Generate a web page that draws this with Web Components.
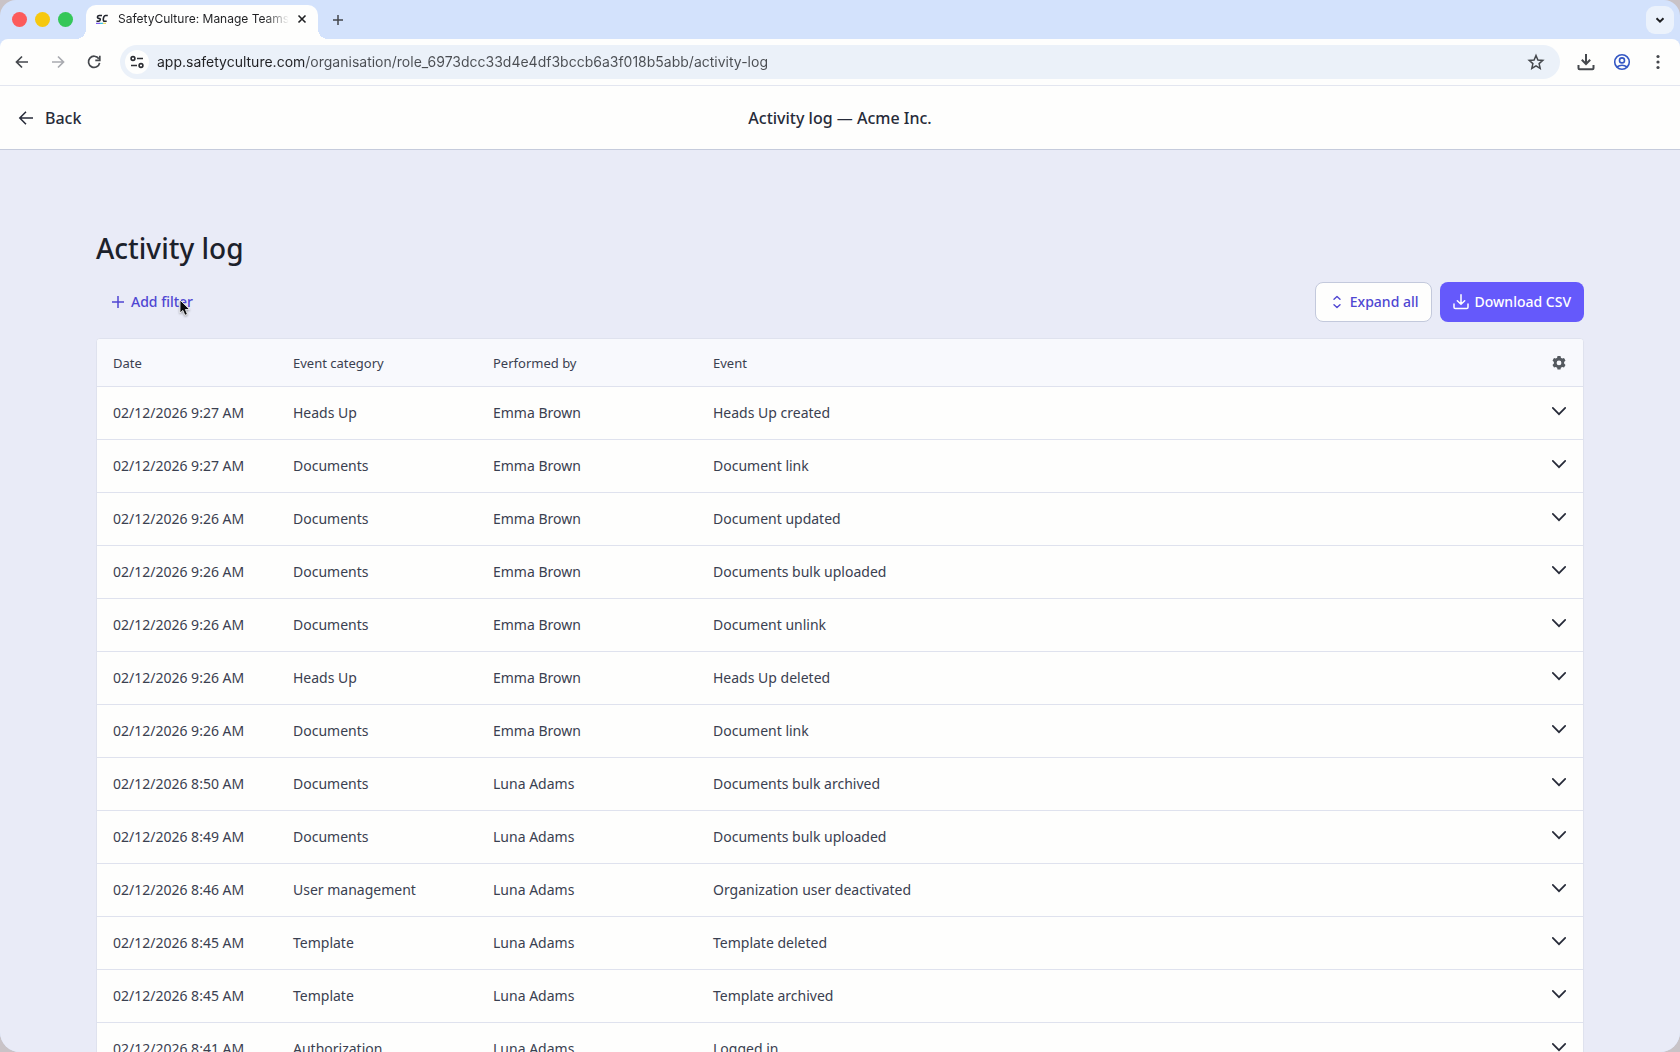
<!DOCTYPE html>
<html lang="en">
<head>
<meta charset="utf-8">
<title>SafetyCulture: Manage Teams</title>
<style>
    html, body
    {
        margin: 0;
        height: 100%;
        overflow: hidden;
        background: #c9c3c7;
    }

    body
    {
        font-family: "Noto Sans", sans-serif;
        color: #1f2533;
    }
</style>
</head>
<body>

<browser-window>
    <tab-strip slot="tabs" label="SafetyCulture: Manage Teams"></tab-strip>
    <address-bar slot="toolbar" url="app.safetyculture.com/organisation/role_6973dcc33d4e4df3bccb6a3f018b5abb/activity-log"></address-bar>
    <page-header>
        <span slot="back">Back</span>
        Activity log — Acme Inc.
    </page-header>
    <activity-page>
        <span slot="title">Activity log</span>
        <app-button slot="filter" kind="text" icon="plus">Add filter</app-button>
        <mouse-pointer slot="filter"></mouse-pointer>
        <app-button slot="actions" kind="outline" icon="expand">Expand all</app-button>
        <app-button slot="actions" kind="primary" icon="tray">Download CSV</app-button>
        <activity-table></activity-table>
    </activity-page>
</browser-window>

<script>
const ICONS = {
    back: [16, '<path d="M14 8H2.5M8 2.5 2.5 8 8 13.5" fill="none" stroke="currentColor" stroke-width="1.7"/>'],
    forward: [16, '<path d="M2 8h11.5M8 2.5 13.500 8 8 13.5" fill="none" stroke="currentColor" stroke-width="1.7"/>'],
    reload: [16, '<path d="M12.800 4.800A5.600 5.600 0 1 0 13.600 8.800M13.800 1.800v4.500H9.300" fill="none" stroke="currentColor" stroke-width="1.7"/>'],
    site: [16, '<g fill="none" stroke="currentColor" stroke-width="1.6"><circle cx="4" cy="4.500" r="1.900"/><path d="M8 4.500h6M2 11.500h6"/><circle cx="12" cy="11.500" r="1.900"/></g>'],
    star: [18, '<path d="m9 2.500 1.900 4.500 4.900.4-3.700 3.200 1.100 4.800L9 12.900l-4.200 2.500 1.100-4.800-3.700-3.200 4.900-.4z" fill="none" stroke="currentColor" stroke-width="1.500"/>'],
    download: [18, '<path d="M9 1v9.500M4.800 6.800 9 11l4.200-4.200M1.500 12v3.200q0 1 1 1h13q1 0 1-1V12" fill="none" stroke="currentColor" stroke-width="2"/>'],
    profile: [18, '<g fill="none" stroke="currentColor" stroke-width="1.600"><circle cx="9" cy="9" r="7.300"/><circle cx="9" cy="7.400" r="2.500"/><path d="M3.800 14q5.200-3.600 10.400 0"/></g>'],
    dots: [16, '<g fill="currentColor"><circle cx="8" cy="2.500" r="1.600"/><circle cx="8" cy="8" r="1.600"/><circle cx="8" cy="13.500" r="1.600"/></g>'],
    close: [10, '<path d="m1.500 1.500 7 7m0-7-7 7" fill="none" stroke="currentColor" stroke-width="1.600"/>'],
    add: [12, '<path d="M6 1v10M1 6h10" fill="none" stroke="currentColor" stroke-width="1.500"/>'],
    caret: [10, '<path d="m1.500 3.300 3.500 3.400 3.500-3.400" fill="none" stroke="currentColor" stroke-width="2"/>'],
    arrow: [16, '<path d="M15 8H1.800M8 1.800 1.800 8 8 14.200" fill="none" stroke="currentColor" stroke-width="1.500"/>'],
    plus: [12, '<path d="M6 0v12M0 6h12" fill="none" stroke="currentColor" stroke-width="1.500"/>'],
    expand: [14, '<path d="M4 4.200 7 1.500l3 2.700M4 9.800l3 2.700 3-2.700" fill="none" stroke="currentColor" stroke-width="1.400" stroke-linecap="round" stroke-linejoin="round"/>'],
    tray: [16, '<path d="M8 .8v9.400M4.300 6.700 8 10.300l3.700-3.600M1 10v3.200q0 1.300 1.300 1.300h11.400q1.300 0 1.300-1.300V10" fill="none" stroke="currentColor" stroke-width="1.500" stroke-linecap="round"/>'],
    chevron: [14, '<path d="m.8 3.800 6.200 6.400 6.200-6.400" fill="none" stroke="currentColor" stroke-width="1.700" stroke-linecap="round"/>'],
    gear: [14, '<path fill-rule="evenodd" fill="currentColor" d="M5.500 0h3l.4 1.800 1.300.8 1.800-.6 1.500 2.600-1.400 1.300v1.700l1.400 1.300-1.500 2.600-1.800-.6-1.300.8-.4 1.900h-3l-.4-1.900-1.300-.8-1.800.6L.5 8.900l1.400-1.300V5.900L.5 4.600 2 2l1.800.6 1.300-.8zM7 4.500a2.400 2.400 0 1 0 0 4.800 2.400 2.400 0 0 0 0-4.800z"/>']
};

function icon(name)
{
    const [size, body] = ICONS[name];
    return `<svg width="${size}" height="${size}" viewBox="0 0 ${size} ${size}" aria-hidden="true">${body}</svg>`;
}

const BUTTON_RESET = `
    button
    {
        display: flex;
        align-items: center;
        justify-content: center;
        margin: 0;
        padding: 0;
        border: 0;
        background: none;
        font: inherit;
        color: inherit;
    }
    svg { display: block; flex: none; }
`;


/**
 * Window frame: tabs, toolbar and the page below them.
 */
class BrowserWindow extends HTMLElement
{
    constructor()
    {
        super();
        this.attachShadow({mode: 'open'}).innerHTML = `
            <style>
                :host
                {
                    display: flex;
                    flex-direction: column;
                    height: 100vh;
                    overflow: hidden;
                    border-radius: 16px 16px 20px 20px;
                    background: #d3e2fc;
                }
                .page
                {
                    flex: 1;
                    min-height: 0;
                    overflow: hidden;
                    background: #e9ebf7;
                }
            </style>
            <slot name="tabs"></slot>
            <slot name="toolbar"></slot>
            <div class="page"><slot></slot></div>
        `;
    }
}
customElements.define('browser-window', BrowserWindow);


class TabStrip extends HTMLElement
{
    constructor()
    {
        super();
        this.attachShadow({mode: 'open'}).innerHTML = `
            <style>
                ${BUTTON_RESET}
                :host
                {
                    display: flex;
                    align-items: center;
                    height: 39px;
                    padding: 0 6px 0 12px;
                    font: 12px/16px Inter, sans-serif;
                    color: #1f2023;
                }
                .lights { display: flex; gap: 8px; }
                .lights button { width: 15px; height: 15px; border-radius: 50%; }
                .red { background: #fc5b5b; }
                .amber { background: #f6c80f; }
                .green { background: #35c759; }
                .tab
                {
                    display: flex;
                    align-items: center;
                    align-self: flex-end;
                    box-sizing: border-box;
                    position: relative;
                    width: 232px;
                    height: 34px;
                    margin-left: 13px;
                    padding: 0 11px 6px 10px;
                    border-radius: 10px 10px 0 0;
                    background: #fefefd;
                }
                /* flared feet of the selected tab */
                .tab::before, .tab::after
                {
                    content: "";
                    position: absolute;
                    bottom: 0;
                    width: 10px;
                    height: 10px;
                }
                .tab::before { right: 100%; background: radial-gradient(circle at 0 0, transparent 10px, #fefefd 10px); }
                .tab::after { left: 100%; background: radial-gradient(circle at 100% 0, transparent 10px, #fefefd 10px); }
                .title
                {
                    flex: 1;
                    min-width: 0;
                    margin: 0 8px 0 10px;
                    overflow: hidden;
                    white-space: nowrap;
                    -webkit-mask-image: linear-gradient(to left, transparent, #000 24px);
                }
                .new { width: 28px; height: 28px; margin-left: 6px; color: #43464b; }
                .search { width: 28px; height: 28px; margin-left: auto; border-radius: 9px; background: #ebf2fc; }
            </style>
            <div class="lights">
                <button class="red" aria-label="Close window"></button>
                <button class="amber" aria-label="Minimise"></button>
                <button class="green" aria-label="Zoom"></button>
            </div>
            <div class="tab">
                <svg width="12" height="12" viewBox="0 0 12 12" aria-hidden="true">
                    <path d="M6 2.500H3.200Q1.700 2.500 1.500 3.900T3 5.400q1.500 0 1.200 1.500T2.400 8.300H.5M11.800 2.500H9.600Q7.900 2.500 7.400 5.400T8.700 8.300h2" fill="none" stroke="#22252e" stroke-width="1.600"/>
                    <path d="M0 10.400h4" stroke="#7a5cf0" stroke-width="1.200"/>
                    <path d="M4 10.400h3" stroke="#3ec3e8" stroke-width="1.200"/>
                    <path d="M7 10.400h3" stroke="#e8dc6a" stroke-width="1.200"/>
                </svg>
                <span class="title"></span>
                <button aria-label="Close tab">${icon('close')}</button>
            </div>
            <button class="new" aria-label="New tab">${icon('add')}</button>
            <button class="search" aria-label="Search tabs">${icon('caret')}</button>
        `;
    }

    connectedCallback()
    {
        this.shadowRoot.querySelector('.title').textContent = this.getAttribute('label');
    }
}
customElements.define('tab-strip', TabStrip);


class AddressBar extends HTMLElement
{
    constructor()
    {
        super();
        this.attachShadow({mode: 'open'}).innerHTML = `
            <style>
                ${BUTTON_RESET}
                :host
                {
                    display: flex;
                    align-items: center;
                    gap: 8px;
                    height: 46px;
                    padding: 0 8px;
                    border-bottom: 1px solid #e3e6f0;
                    border-radius: 8px 8px 0 0;
                    background: #fefefd;
                    color: #45484d;
                }
                button { width: 28px; height: 28px; }
                .off { color: #a9abb0; }
                .box
                {
                    display: flex;
                    align-items: center;
                    gap: 8px;
                    flex: 1;
                    height: 34px;
                    margin: 0 4px;
                    padding: 0 10px 0 5px;
                    border-radius: 17px;
                    background: #ebf1f9;
                }
                .site { width: 24px; height: 24px; border-radius: 50%; background: #fefefd; color: #2c2e33; }
                /* the host part of the address is darker than its path */
                input
                {
                    flex: 1;
                    min-width: 0;
                    height: 24px;
                    padding: 0;
                    border: 0;
                    outline: 0;
                    font: 14px/24px Inter, sans-serif;
                    color: #4a4d52;
                    background: linear-gradient(to right, #1f2023 148px, #4a4d52 148px);
                    -webkit-background-clip: text;
                    -webkit-text-fill-color: transparent;
                }
                .profile { color: #3457c4; }
            </style>
            <button aria-label="Back">${icon('back')}</button>
            <button class="off" aria-label="Forward">${icon('forward')}</button>
            <button aria-label="Reload">${icon('reload')}</button>
            <div class="box">
                <button class="site" aria-label="Site information">${icon('site')}</button>
                <input type="text" aria-label="Address" spellcheck="false">
                <button aria-label="Bookmark">${icon('star')}</button>
            </div>
            <button aria-label="Downloads">${icon('download')}</button>
            <button class="profile" aria-label="Profile">${icon('profile')}</button>
            <button aria-label="Menu">${icon('dots')}</button>
        `;
    }

    connectedCallback()
    {
        this.shadowRoot.querySelector('input').value = this.getAttribute('url');
    }
}
customElements.define('address-bar', AddressBar);


class PageHeader extends HTMLElement
{
    constructor()
    {
        super();
        this.attachShadow({mode: 'open'}).innerHTML = `
            <style>
                svg { display: block; }
                :host
                {
                    display: grid;
                    grid-template-columns: 1fr auto 1fr;
                    align-items: center;
                    height: 63px;
                    padding: 0 18px;
                    border-bottom: 1px solid #c5cbdc;
                    background: #fefefd;
                    font-size: 16px;
                    font-weight: 500;
                    line-height: 24px;
                    color: #272b39;
                }
                a { display: flex; align-items: center; gap: 11px; color: inherit; text-decoration: none; }
            </style>
            <a href="#">${icon('arrow')}<slot name="back"></slot></a>
            <div><slot></slot></div>
        `;
    }
}
customElements.define('page-header', PageHeader);


class ActivityPage extends HTMLElement
{
    constructor()
    {
        super();
        this.attachShadow({mode: 'open'}).innerHTML = `
            <style>
                :host { display: block; padding: 80px 96px; }
                h1 { margin: 0 0 16px; font-size: 28px; font-weight: 500; line-height: 36px; color: #1c212b; }
                .bar { display: flex; justify-content: space-between; margin-bottom: 16px; }
                .filter { position: relative; }
                .actions { display: flex; gap: 8px; }
            </style>
            <h1><slot name="title"></slot></h1>
            <div class="bar">
                <div class="filter"><slot name="filter"></slot></div>
                <div class="actions"><slot name="actions"></slot></div>
            </div>
            <slot></slot>
        `;
    }
}
customElements.define('activity-page', ActivityPage);


class AppButton extends HTMLElement
{
    constructor()
    {
        super();
        this.attachShadow({mode: 'open'}).innerHTML = `
            <style>
                ${BUTTON_RESET}
                :host { display: block; }
                button
                {
                    box-sizing: border-box;
                    gap: 6px;
                    height: 40px;
                    padding: 0 12px;
                    border: 1px solid transparent;
                    border-radius: 8px;
                    font-size: 14px;
                    font-weight: 500;
                    line-height: 20px;
                    color: #4f46d2;
                    white-space: nowrap;
                }
                :host([kind="text"]) button { gap: 7px; padding: 0 15px; }
                :host([kind="outline"]) button { padding: 0 12px 0 14px; border-color: #c3c9dc; background: #fefefd; }
                :host([kind="primary"]) button { background: #6559fb; color: #fff; }
            </style>
            <button><slot></slot></button>
        `;
    }

    connectedCallback()
    {
        this.shadowRoot.querySelector('button').insertAdjacentHTML('afterbegin', icon(this.getAttribute('icon')));
    }
}
customElements.define('app-button', AppButton);


class MousePointer extends HTMLElement
{
    constructor()
    {
        super();
        this.attachShadow({mode: 'open'}).innerHTML = `
            <style>
                :host { position: absolute; left: 83px; top: 17px; }
                svg { display: block; filter: drop-shadow(0 1px 1px rgba(0, 0, 0, .35)); }
            </style>
            <svg width="12" height="18" viewBox="0 0 12 18" aria-hidden="true">
                <path d="M1 1v13l2.900-2.600 2 4.900 2.500-1-2-4.800h4.200z" fill="#0b0b0d" stroke="#fff" stroke-width=".8"/>
            </svg>
        `;
    }
}
customElements.define('mouse-pointer', MousePointer);


/**
 * Table of logged events.
 */
class ActivityTable extends HTMLElement
{
    #rows = [
        ['02/12/2026 9:27 AM', 'Heads Up', 'Emma Brown', 'Heads Up created'],
        ['02/12/2026 9:27 AM', 'Documents', 'Emma Brown', 'Document link'],
        ['02/12/2026 9:26 AM', 'Documents', 'Emma Brown', 'Document updated'],
        ['02/12/2026 9:26 AM', 'Documents', 'Emma Brown', 'Documents bulk uploaded'],
        ['02/12/2026 9:26 AM', 'Documents', 'Emma Brown', 'Document unlink'],
        ['02/12/2026 9:26 AM', 'Heads Up', 'Emma Brown', 'Heads Up deleted'],
        ['02/12/2026 9:26 AM', 'Documents', 'Emma Brown', 'Document link'],
        ['02/12/2026 8:50 AM', 'Documents', 'Luna Adams', 'Documents bulk archived'],
        ['02/12/2026 8:49 AM', 'Documents', 'Luna Adams', 'Documents bulk uploaded'],
        ['02/12/2026 8:46 AM', 'User management', 'Luna Adams', 'Organization user deactivated'],
        ['02/12/2026 8:45 AM', 'Template', 'Luna Adams', 'Template deleted'],
        ['02/12/2026 8:45 AM', 'Template', 'Luna Adams', 'Template archived'],
        ['02/12/2026 8:41 AM', 'Authorization', 'Luna Adams', 'Logged in']
    ];

    constructor()
    {
        super();
        this.attachShadow({mode: 'open'}).innerHTML = `
            <style>
                ${BUTTON_RESET}
                :host
                {
                    display: block;
                    overflow: hidden;
                    border: 1px solid #dfe2ee;
                    border-radius: 4px;
                    background: #fefefd;
                }
                table { width: 100%; border-spacing: 0; table-layout: fixed; font-size: 14px; line-height: 20px; color: #3a4050; }
                th, td { box-sizing: border-box; padding: 0 16px; border-bottom: 1px solid #dfe2ee; text-align: left; white-space: nowrap; }
                th { height: 48px; font-size: 13px; font-weight: 400; background: #f8f9fd; }
                td { height: 53px; }
                th:nth-child(1) { width: 180px; }
                th:nth-child(2) { width: 200px; }
                th:nth-child(3) { width: 220px; }
                th:nth-child(5) { width: 47px; }
                button { color: #555a60; }
                td button { height: 18px; align-items: flex-start; color: #262a38; }
            </style>
            <table>
                <thead>
                    <tr>
                        <th>Date</th><th>Event category</th><th>Performed by</th><th>Event</th>
                        <th><button aria-label="Table settings">${icon('gear')}</button></th>
                    </tr>
                </thead>
                <tbody></tbody>
            </table>
        `;
    }

    connectedCallback()
    {
        const body = this.shadowRoot.querySelector('tbody');
        for(const row of this.#rows)
        {
            const tr = body.insertRow();
            for(const text of row) tr.insertCell().textContent = text;
            tr.insertCell().innerHTML = `<button aria-label="Show details">${icon('chevron')}</button>`;
        }
    }
}
customElements.define('activity-table', ActivityTable);
</script>
</body>
</html>
